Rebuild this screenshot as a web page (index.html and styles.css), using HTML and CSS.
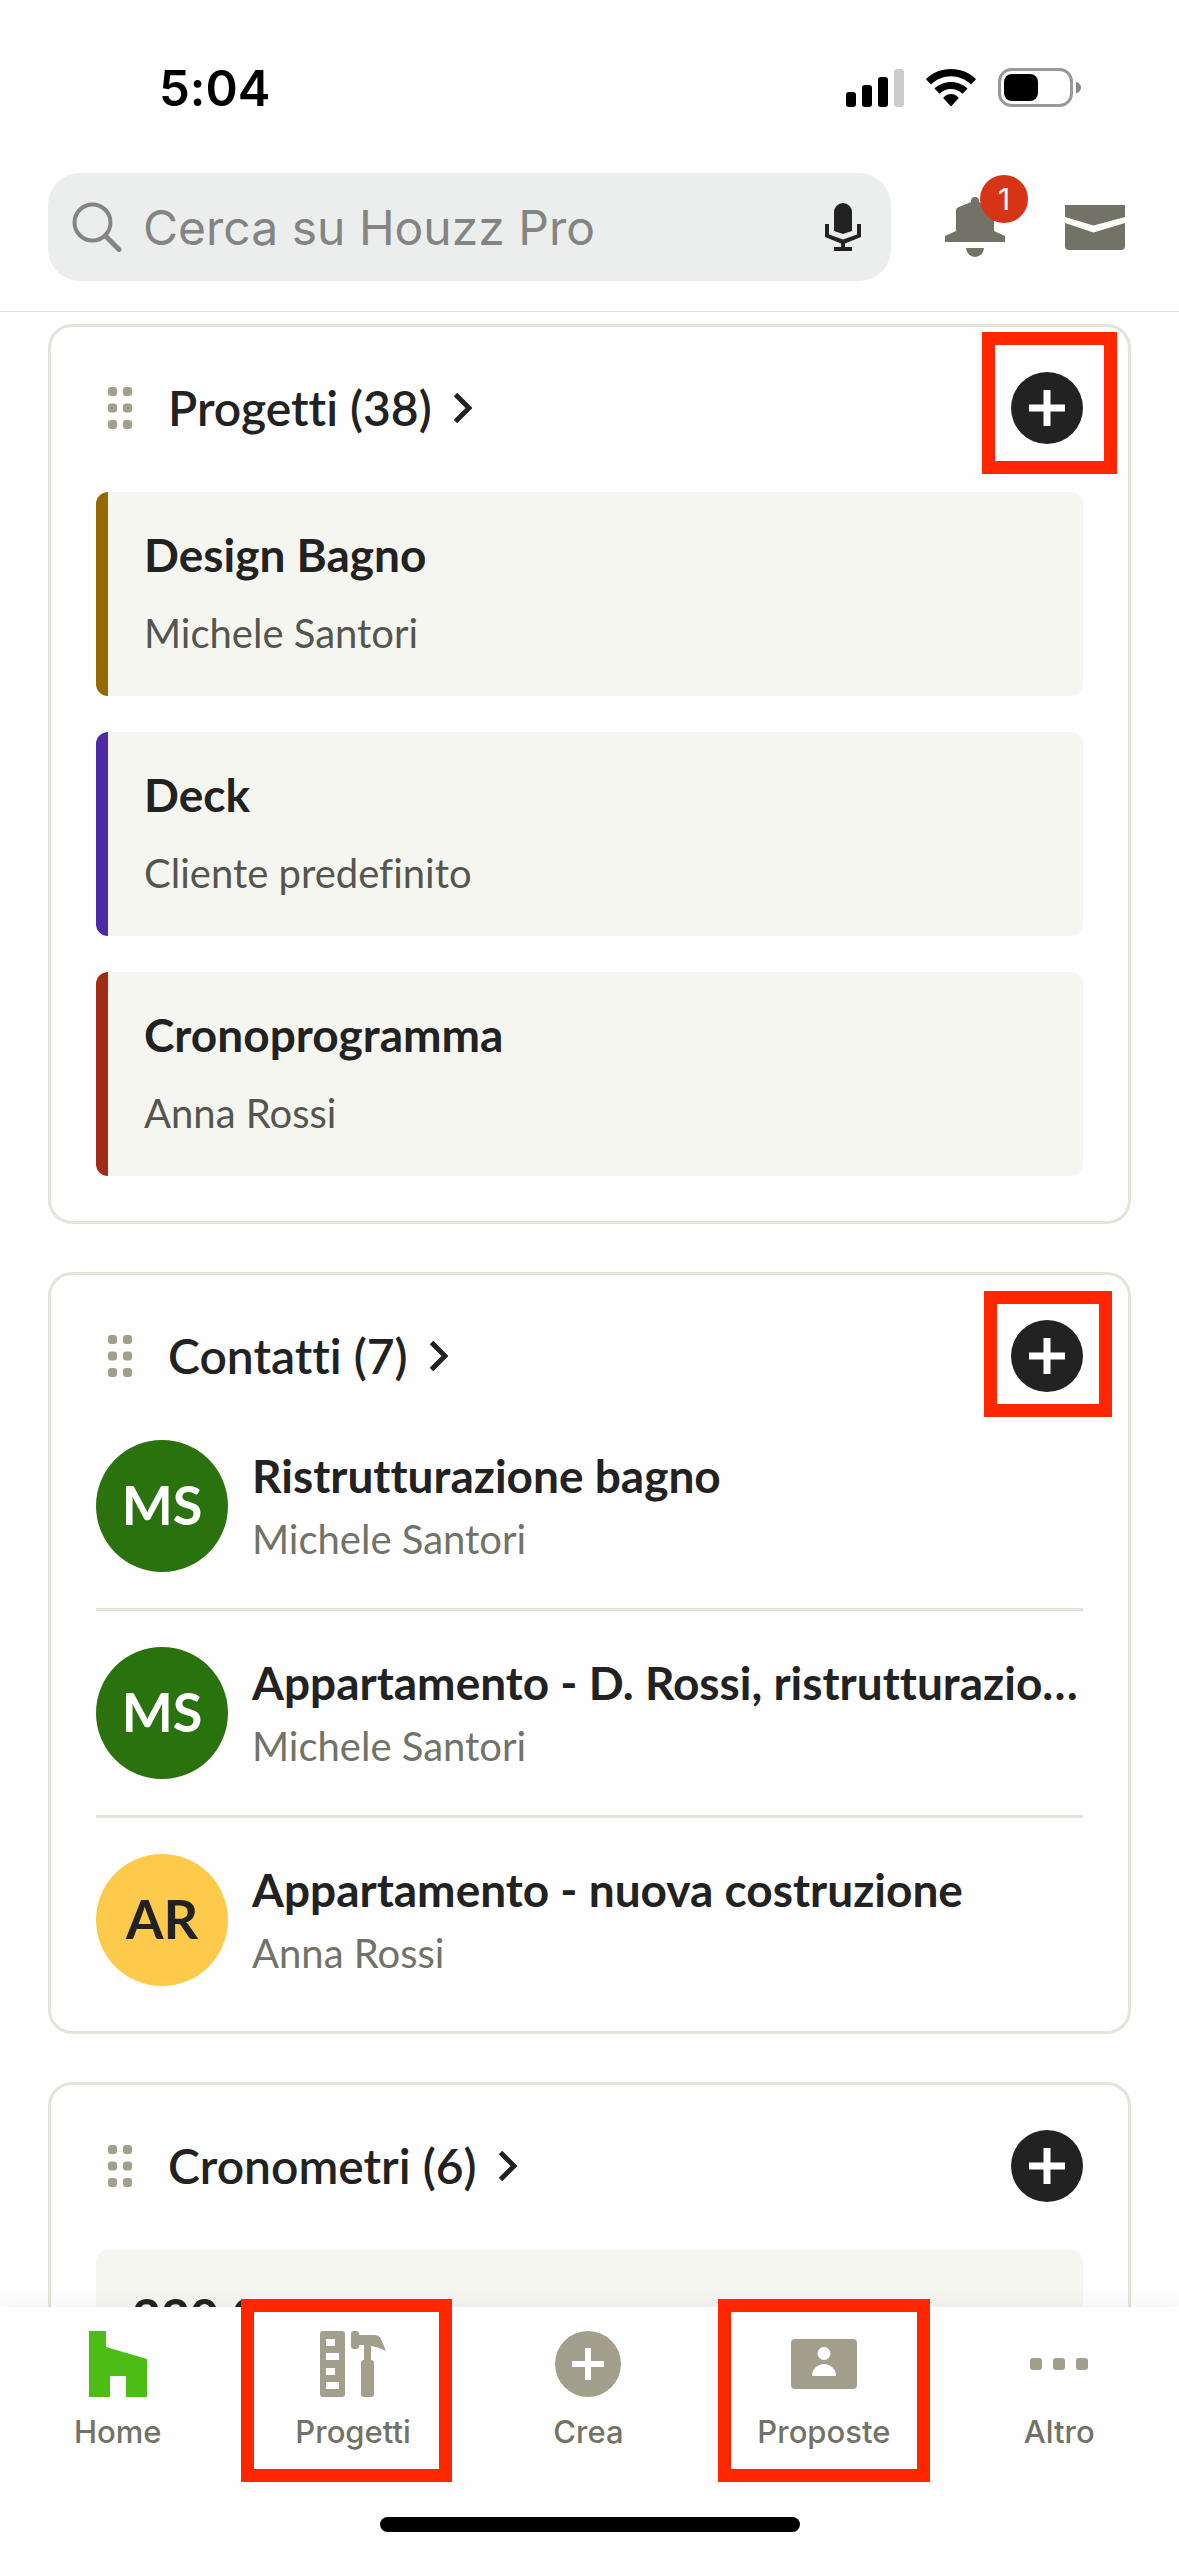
FILE: index.html
```html
<!DOCTYPE html>
<html lang="it">
<head>
<meta charset="utf-8">
<meta name="viewport" content="width=device-width, initial-scale=1">
<title>Houzz Pro</title>
<link rel="stylesheet" href="styles.css">
</head>
<body>
<svg class="sprite" aria-hidden="true">
  <symbol id="grip" viewBox="0 0 24 42">
    <rect x="0" y="0" width="9" height="9" rx="3"/><rect x="15" y="0" width="9" height="9" rx="3"/>
    <rect x="0" y="16.500" width="9" height="9" rx="3"/><rect x="15" y="16.500" width="9" height="9" rx="3"/>
    <rect x="0" y="33" width="9" height="9" rx="3"/><rect x="15" y="33" width="9" height="9" rx="3"/>
  </symbol>
  <symbol id="chevron" viewBox="0 0 18 30">
    <path d="M1.500 1.500 15 15 1.500 28.500" fill="none" stroke="currentColor" stroke-width="5"/>
  </symbol>
  <symbol id="plus" viewBox="0 0 72 72">
    <circle cx="36" cy="36" r="36"/>
    <path d="M36 18v36M18 36h36" stroke="#fff" stroke-width="7"/>
  </symbol>
</svg>
<div class="app">
  <header class="top">
    <div class="status">
      <span class="clock">5:04</span>
      <div class="indicators">
        <svg width="58" height="38" viewBox="0 0 58 38" aria-hidden="true"><rect x="0" y="23" width="10" height="15" rx="3"/><rect x="16" y="16" width="10" height="22" rx="3"/><rect x="32" y="8" width="10" height="30" rx="3"/><rect x="48" y="0" width="10" height="38" rx="3" fill="#ccc"/></svg>
        <svg width="50" height="38" viewBox="0 0 50 38" aria-hidden="true"><path d="M25 0C15.500 0 6.500 3.500 0 10.200L5 15.500C10.500 10.300 17.500 7.300 25 7.300S39.500 10.300 45 15.500L50 10.200C43.500 3.500 34.500 0 25 0ZM25 13C18.800 13 13 15.400 8.500 19.500L13.500 24.800C16.500 21.800 20.600 20 25 20S33.500 21.800 36.500 24.800L41.500 19.500C37 15.400 31.200 13 25 13ZM25 25C22 25 19.200 26.200 17.200 29L25 37.500 32.800 29C30.800 26.200 28 25 25 25Z"/></svg>
        <svg width="83" height="40" viewBox="0 0 83 40" aria-hidden="true"><rect x="1.500" y="1.500" width="72" height="36" rx="12" fill="none" stroke="#999" stroke-width="3"/><rect x="6" y="6" width="34" height="27" rx="8"/><path d="M78 13.500q5 2 5 6t-5 6z" fill="#888"/></svg>
      </div>
    </div>
    <div class="toolbar">
      <label class="search">
        <svg width="50" height="50" viewBox="0 0 50 50" fill="none" stroke="#838483" stroke-width="4" aria-hidden="true"><circle cx="20.500" cy="20.500" r="18"/><path d="M33.500 34 47 47.500" stroke-width="5" stroke-linecap="round"/></svg>
        <input type="search" placeholder="Cerca su Houzz Pro" aria-label="Cerca su Houzz Pro">
        <button class="plain" type="button" aria-label="Ricerca vocale"><svg width="36" height="48" viewBox="0 0 36 48" fill="#222" aria-hidden="true"><path d="M9 9a9 9 0 0 1 18 0v19l-9 3-9-3zM0 21h4v10.500L18 36.500l14-5V21h4v13l-16 6.500V44h7v4H9v-4h7v-3.500L0 34z"/></svg></button>
      </label>
      <button class="plain bell" type="button" aria-label="Notifiche">
        <svg width="60" height="60" viewBox="0 0 60 60" fill="#727366" aria-hidden="true"><path d="M26 5V4a4 4 0 0 1 8 0v1l12 5a4 4 0 0 1 3 4v20l11 5v6H0v-6l11-5V14a4 4 0 0 1 3-4zM21 51h18a9 9 0 0 1-18 0z"/></svg>
        <span class="badge">1</span>
      </button>
      <button class="plain" type="button" aria-label="Messaggi"><svg width="60" height="45" viewBox="0 0 60 45" fill="#727366" aria-hidden="true"><path d="M0 0h60v12L28.500 20.500 0 12zM0 18l28.500 9.500L60 18v23a4 4 0 0 1-4 4H4a4 4 0 0 1-4-4z"/></svg></button>
    </div>
  </header>

  <main class="feed">
    <section class="card">
      <div class="card-head">
        <svg class="grip" width="24" height="42"><use href="#grip"/></svg>
        <h2><a href="#progetti">Progetti (38) <svg width="18" height="30"><use href="#chevron"/></svg></a></h2>
        <button class="plain add mark mark-wide" type="button" aria-label="Aggiungi progetto"><svg width="72" height="72"><use href="#plus"/></svg></button>
      </div>
      <ul class="tiles">
        <li class="tile ochre"><h3>Design Bagno</h3><p>Michele Santori</p></li>
        <li class="tile violet"><h3>Deck</h3><p>Cliente predefinito</p></li>
        <li class="tile rust"><h3>Cronoprogramma</h3><p>Anna Rossi</p></li>
      </ul>
    </section>

    <section class="card">
      <div class="card-head">
        <svg class="grip" width="24" height="42"><use href="#grip"/></svg>
        <h2><a href="#contatti">Contatti (7) <svg width="18" height="30"><use href="#chevron"/></svg></a></h2>
        <button class="plain add mark" type="button" aria-label="Aggiungi contatto"><svg width="72" height="72"><use href="#plus"/></svg></button>
      </div>
      <ul>
        <li class="contact"><span class="avatar green">MS</span><div class="who"><h3>Ristrutturazione bagno</h3><p>Michele Santori</p></div></li>
        <li class="contact"><span class="avatar green">MS</span><div class="who"><h3>Appartamento - D. Rossi, ristrutturazio…</h3><p>Michele Santori</p></div></li>
        <li class="contact"><span class="avatar yellow">AR</span><div class="who"><h3>Appartamento - nuova costruzione</h3><p>Anna Rossi</p></div></li>
      </ul>
    </section>

    <section class="card">
      <div class="card-head">
        <svg class="grip" width="24" height="42"><use href="#grip"/></svg>
        <h2><a href="#cronometri">Cronometri (6) <svg width="18" height="30"><use href="#chevron"/></svg></a></h2>
        <button class="plain add" type="button" aria-label="Aggiungi cronometro"><svg width="72" height="72"><use href="#plus"/></svg></button>
      </div>
      <p class="timer">220:0:0:00</p>
    </section>
  </main>

  <nav class="tabs" aria-label="Principale">
    <div class="tab-row">
      <a class="tab" href="#home"><svg width="66" height="66" viewBox="0 0 66 66" fill="#4dbc15" aria-hidden="true"><path d="M4 0h17v16l41 12v38H41V45H25v21H4z"/></svg><span>Home</span></a>
      <a class="tab mark mark-left" href="#progetti"><svg width="66" height="66" viewBox="0 0 66 66" fill="#a29f8d" aria-hidden="true"><path fill-rule="evenodd" d="M3 0h19a3 3 0 0 1 3 3v60a3 3 0 0 1-3 3H3a3 3 0 0 1-3-3V3a3 3 0 0 1 3-3zM6 8v7h9V8zM6 22v7h13v-7zM6 37v7h9v-7zM6 51v7h13v-7z"/><path d="M31 3a3 3 0 0 1 3-3h2a3 3 0 0 1 3 3v1h15q5 0 7 4l5 12q-7-4-15-5v14a3 3 0 0 1 3 3v31a3 3 0 0 1-3 3h-7a3 3 0 0 1-3-3V32a3 3 0 0 1 3-3V14h-5v1a3 3 0 0 1-3 3h-2a3 3 0 0 1-3-3z"/></svg><span>Progetti</span></a>
      <a class="tab" href="#crea"><svg width="66" height="66" viewBox="0 0 66 66" fill="#a29f8d" aria-hidden="true"><circle cx="33" cy="33" r="33"/><path d="M33 17v32M17 33h32" stroke="#fff" stroke-width="6"/></svg><span>Crea</span></a>
      <a class="tab mark" href="#proposte"><svg width="66" height="66" viewBox="0 0 66 66" fill="#a29f8d" aria-hidden="true"><rect y="8" width="66" height="50" rx="4"/><circle cx="33" cy="22.500" r="6.500" fill="#fff"/><path d="M21 45a12 12 0 0 1 24 0z" fill="#fff"/></svg><span>Proposte</span></a>
      <a class="tab" href="#altro"><svg width="66" height="66" viewBox="0 0 66 66" fill="#a29f8d" aria-hidden="true"><rect x="4" y="27" width="12" height="12" rx="3"/><rect x="27" y="27" width="12" height="12" rx="3"/><rect x="50" y="27" width="12" height="12" rx="3"/></svg><span>Altro</span></a>
    </div>
    <div class="home-bar"></div>
  </nav>
</div>
</body>
</html>
```
FILE: styles.css
```css
* { box-sizing: border-box; margin: 0; padding: 0; }
body { background: #fefefe; color: #222; font-family: Lato, "Open Sans", sans-serif; font-variant-ligatures: none; }
.sprite { position: absolute; width: 0; height: 0; }
svg { display: block; flex: none; }
ul { list-style: none; }
a { color: inherit; text-decoration: none; }
.plain { position: relative; display: block; flex: none; border: 0; background: none; font: inherit; }

.app { display: flex; flex-direction: column; height: 100vh; overflow: hidden; }

/* Status bar and search */
.top { flex: none; border-bottom: 1px solid #dedede; background: #fefefe; font-family: Inter, "Liberation Sans", sans-serif; }
.status { display: flex; align-items: center; justify-content: space-between; height: 173px; padding: 3px 98px 0 159px; }
.clock { font-size: 49px; font-weight: 600; color: #000; }
.indicators { display: flex; align-items: center; gap: 22px; }
.toolbar { display: flex; align-items: center; gap: 54px; padding: 0 54px 30px 48px; }
.toolbar > .bell { margin-right: 6px; }
.search { display: flex; flex: 1; align-items: center; min-width: 0; height: 108px; padding: 0 30px 0 24px; border-radius: 32px; background: #eceeed; }
.search input { flex: 1; min-width: 0; margin-left: 21px; border: 0; outline: 0; background: none; color: #222; font-family: inherit; font-size: 48px; }
.search input::placeholder { color: #838483; opacity: 1; }
.badge { position: absolute; left: 35px; top: -22px; width: 48px; height: 48px; border-radius: 50%; background: #d73416; color: #fff; font-size: 30px; line-height: 48px; text-align: center; }

/* Cards */
.feed { display: flex; flex: 1; flex-direction: column; gap: 48px; min-height: 0; padding: 12px 48px 0; overflow: hidden; }
.card { flex: none; padding: 45px; border: 3px solid #e4e4da; border-radius: 24px; }
.card-head { display: flex; align-items: center; margin-bottom: 48px; padding-left: 12px; }
.grip { fill: #a29f8d; }
.add { fill: #222; }
h2 { flex: 1; margin-left: 36px; font-size: 48px; font-weight: 600; line-height: 72px; }
h2 a { display: inline-flex; align-items: center; gap: 22px; }
h3 { font-size: 46px; font-weight: 700; line-height: 60px; }

.tiles { display: grid; gap: 36px; }
.tile { padding: 33px 36px 36px; border-left: 12px solid; border-radius: 12px; background: #f6f6f1; }
.tile p { margin-top: 21px; color: #555550; font-size: 40px; line-height: 54px; }
.ochre { border-color: #956900; }
.violet { border-color: #4f2aa8; }
.rust { border-color: #a02c16; }

.contact { display: flex; align-items: center; gap: 24px; padding: 36px 0; border-bottom: 3px solid #e4e4da; }
.contact:first-child { padding-top: 0; }
.contact:last-child { padding-bottom: 0; border-bottom: 0; }
.avatar { flex: none; width: 132px; border-radius: 50%; font-size: 54px; font-weight: 700; line-height: 130px; height: 132px; text-align: center; }
.green { background: #2a720d; color: #fff; }
.yellow { background: #fdca4b; color: #222; }
.who { flex: 1; min-width: 0; }
.who h3 { overflow: hidden; text-overflow: ellipsis; white-space: nowrap; }
.who p { margin-top: 6px; color: #727366; font-size: 40px; line-height: 54px; }
.timer { padding: 30px 36px; border-radius: 12px; background: #f6f6f1; font-size: 50px; font-weight: 700; line-height: 72px; }

/* Tab bar */
.tabs { position: relative; flex: none; padding-bottom: 24px; background: #fefefe; box-shadow: 0 0 24px rgba(0, 0, 0, .06); font-family: Inter, "Liberation Sans", sans-serif; }
.tab-row { display: grid; grid-template-columns: repeat(5, 1fr); margin-bottom: 66px; padding-right: 2px; }
.tab { position: relative; display: flex; flex-direction: column; align-items: center; gap: 16px; padding-top: 24px; color: #727366; font-size: 31px; font-weight: 500; line-height: 38px; }
.home-bar { width: 420px; height: 15px; margin: 0 auto; border-radius: 8px; background: #000; }

/* Highlight frames */
.mark::after { content: ""; position: absolute; border: 13px solid #ff2600; pointer-events: none; }
.add.mark::after { inset: -29px -29px -25px -27px; }
.add.mark-wide::after { inset: -40px -34px -30px -29px; }
.tab.mark::after { inset: -8px 12px -31px; }
.tab.mark-left::after { inset: -8px 19px -31px 6px; }
```
